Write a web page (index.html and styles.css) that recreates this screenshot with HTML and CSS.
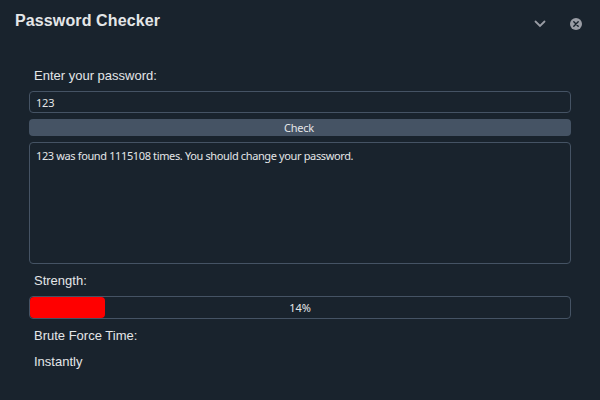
FILE: index.html
```html
<!DOCTYPE html>
<html lang="en">
<head>
<meta charset="utf-8">
<title>Password Checker</title>
<link rel="stylesheet" href="styles.css">
</head>
<body>
<header class="titlebar">
  <h1 class="title">Password Checker</h1>
  <button class="icon-button" aria-label="Minimize"><svg width="12" height="12" viewBox="0 0 12 12"><path d="M1.500 3.500 6 8l4.500-4.500" fill="none" stroke="#9a9da5" stroke-width="1.800" stroke-linecap="round"/></svg></button>
  <button class="icon-button" aria-label="Close"><svg width="12" height="12" viewBox="0 0 12 12"><circle cx="6" cy="6" r="6" fill="#9a9da5"/><path d="m3.800 3.800 4.400 4.400M8.200 3.800 3.800 8.200" stroke="#19232d" stroke-width="1.400" stroke-linecap="round"/></svg></button>
</header>
<main class="content">
  <label class="label" for="password">Enter your password:</label>
  <input class="field" id="password" value="123">
  <button class="check">Check</button>
  <div class="output"><span class="message">123 was found 1115108 times. You should change your password.</span></div>
  <div class="label strength">Strength:</div>
  <div class="progress"><div class="bar" style="width:14%"></div><span class="percent">14%</span></div>
  <div class="label time">Brute Force Time:</div>
  <div class="label result">Instantly</div>
</main>
</body>
</html>
```

FILE: styles.css
```css
* { box-sizing: border-box; }
body {
  margin: 0;
  height: 400px;
  overflow: hidden;
  background: #19232d;
  color: #e4e6e8;
  font: 11px/14px "Noto Sans", sans-serif;
}
.titlebar { display: flex; height: 66px; padding: 10px 18px 0 15px; }
.title { margin: 1px auto 0 0; font: bold 16px/20px "Liberation Sans", sans-serif; letter-spacing: 0.12px; }
.icon-button { width: 12px; height: 12px; margin: 8px 0 0 24px; padding: 0; border: 0; background: none; }
.icon-button svg { display: block; }
.content { display: flex; flex-direction: column; padding: 0 29px; }
.label { height: 19px; padding-left: 5px; font: 13px/19px "Liberation Sans", sans-serif; }
.field { height: 22px; margin-top: 6px; padding: 1px 6px 0; border: 1px solid #455364; border-radius: 4px; background: #19232d; color: inherit; font: inherit; letter-spacing: -0.2px; outline: 0; }
.check { height: 17px; margin-top: 6px; padding: 0 2px 0 0; border: 0; border-radius: 4px; background: #455364; color: inherit; font: inherit; letter-spacing: -0.2px; }
.output { height: 122px; margin-top: 6px; padding: 6px; border: 1px solid #455364; border-radius: 4px; }
.message { letter-spacing: -0.370px; }
.strength { margin-top: 7px; }
.progress { position: relative; height: 23px; margin-top: 6px; border: 1px solid #455364; border-radius: 4px; text-align: center; line-height: 22px; }
.bar { position: absolute; inset: 0 auto 0 0; max-width: 75px; border-radius: 4px; background: #f00; }
.percent { position: relative; }
.time { margin-top: 7px; }
.result { margin-top: 7px; }
```
